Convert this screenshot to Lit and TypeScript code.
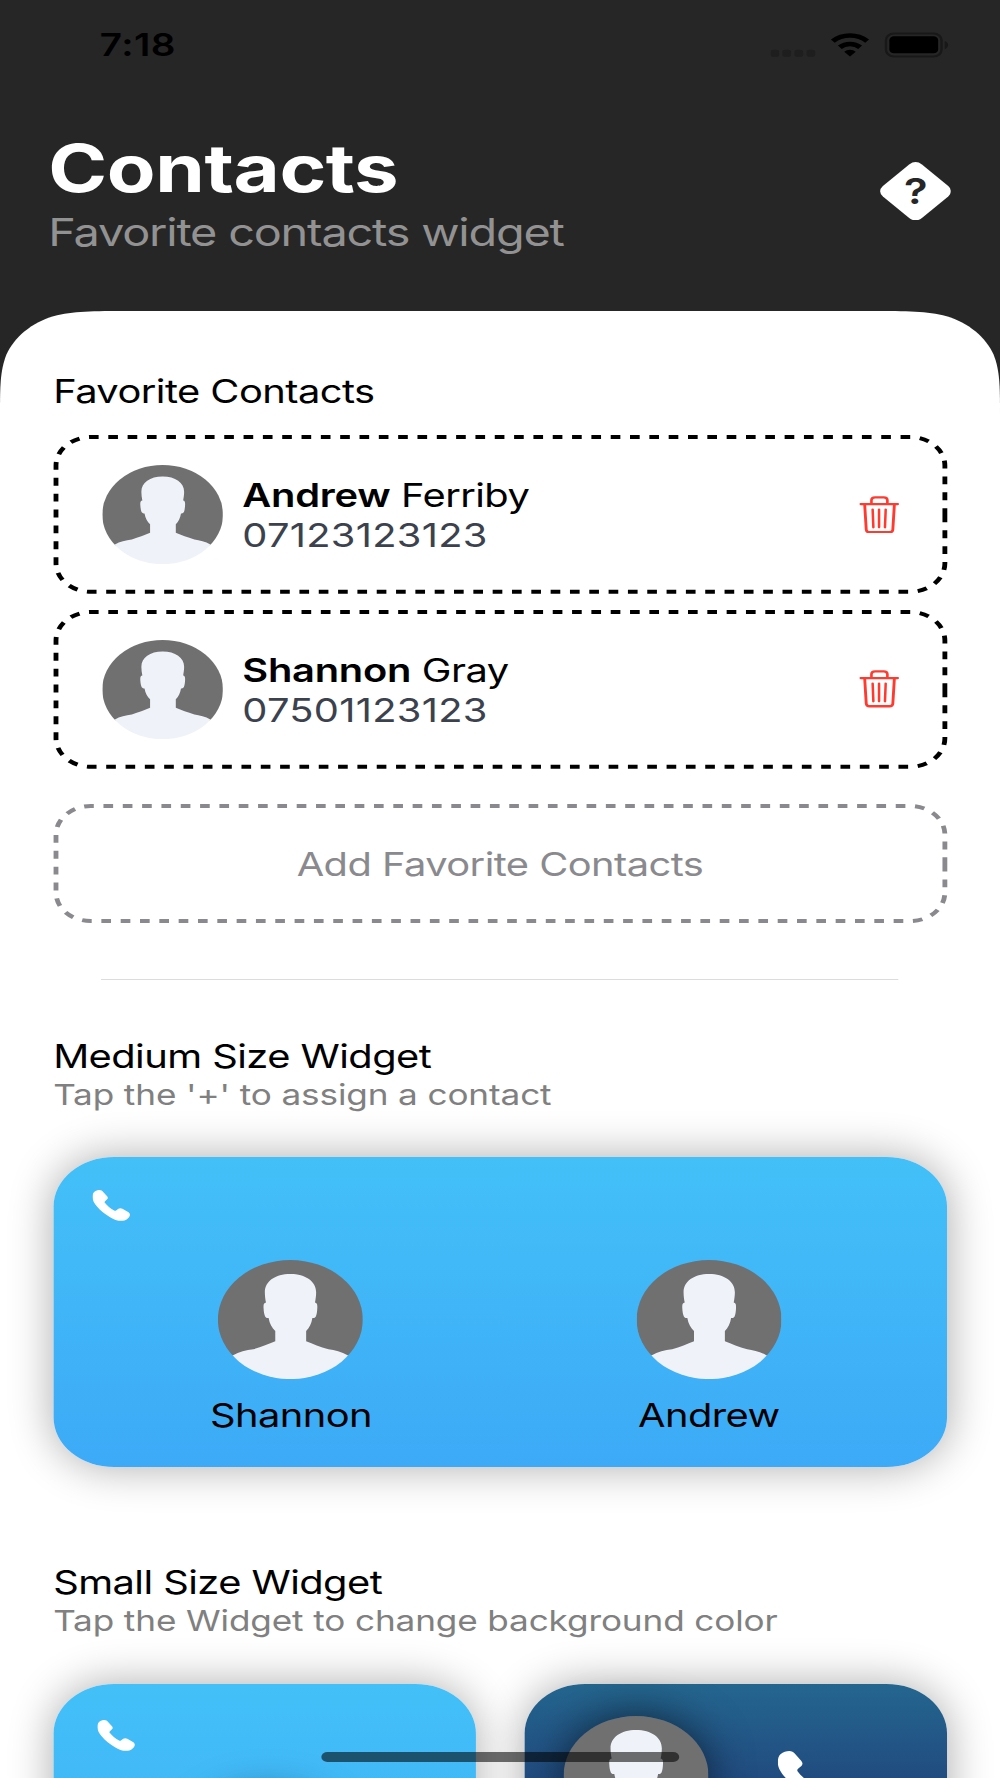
import { LitElement, html, css, svg } from "lit";
import { customElement, property } from "lit/decorators.js";

interface Contact {
  first: string;
  last: string;
  phone: string;
}

const CONTACTS: Contact[] = [
  { first: "Andrew", last: "Ferriby", phone: "07123123123" },
  { first: "Shannon", last: "Gray", phone: "07501123123" },
];

const ASSIGNED = ["Shannon", "Andrew"];

@customElement("contact-avatar")
class ContactAvatar extends LitElement {
  static styles = css`
    :host { display: block; width: 50px; height: 50px; border-radius: 50%; flex: none; }
    svg { display: block; width: 100%; height: 100%; }
  `;
  render() {
    return html`<svg viewBox="0 0 100 100">
      <defs><clipPath id="round"><circle cx="50" cy="50" r="50" /></clipPath></defs>
      <g clip-path="url(#round)">
        <rect width="100" height="81" fill="#707070" />
        <path fill="#eff3f9" d="M50 11.7C39.5 11.7 32.4 18 32.4 27C32.4 30 32.7 33 33.2 35.7C31.8 36 31.4 37 31.5 40C31.6 43 32 46 32.7 47.6C33.3 48.6 34.2 48.8 35 48.8C35.6 53.5 37.4 57.4 39.6 59.6V68.2C35 70.6 30 72.8 24.5 75C19.5 75.8 14.5 77 10.5 80L0 81V101H100V81L89.5 80C85.5 77 80.5 75.8 76.3 75C70.5 72.8 65.6 70.6 60.9 68.2V59.6C63 57.4 64.6 53.5 65.2 48.8C66 48.8 66.9 48.6 67.5 47.6C68.2 46 68.5 43 68.6 40C68.7 37 68.3 36 67 35.7C67.4 33 67.8 30 67.8 27C67.8 18 60.5 11.7 50 11.7Z" />
      </g>
    </svg>`;
  }
}

@customElement("phone-icon")
class PhoneIcon extends LitElement {
  static styles = css`
    :host { display: block; width: 15.5px; height: 15.6px; }
    svg { display: block; width: 100%; height: 100%; }
  `;
  render() {
    return html`<svg viewBox="0 0 100 100" fill="#fff">
      <path d="M4.4 6.5C9 2 14 0 19 0C23 0 26 2.500 28 5L39 20C41.500 24 41.500 27 39 30L33.500 36C32 38 31.800 39.500 33 41.500C38 50 49 61.500 58 66.500C60 67.500 61.500 67.300 63 66L69 61C72.500 58.300 76 58.300 80 61L95 71.500C98 73.700 100 76.500 100 80.500C100 86 96 91 92 95C88 98.500 83 100 77 100C66 100 57 95 47 88C33 78 21 66 12 53C5 43 0 33.500 0 23C0 16 1 10 4.400 6.500Z" />
    </svg>`;
  }
}

/** Rounded box whose dashes begin at the middle of the right edge and run clockwise. */
@customElement("dashed-box")
class DashedBox extends LitElement {
  @property({ type: Number }) h = 78;
  @property() stroke = "#000";
  static styles = css`
    :host { display: block; position: relative; width: 368px; }
    .outline { position: absolute; inset: 0; width: 100%; height: 100%; overflow: visible; }
    .body { position: relative; }
  `;
  render() {
    const w = 368, r = 14.4, h = this.h;
    const d = `M${w} ${h / 2}V${h - r}A${r} ${r} 0 0 1 ${w - r} ${h}H${r}A${r} ${r} 0 0 1 0 ${h - r}V${r}A${r} ${r} 0 0 1 ${r} 0H${w - r}A${r} ${r} 0 0 1 ${w} ${r}Z`;
    return html`
      <svg class="outline" viewBox="0 0 ${w} ${h}" fill="none">
        ${svg`<path d=${d} stroke=${this.stroke} stroke-width="2" stroke-dasharray="4 4" />`}
      </svg>
      <div class="body"><slot></slot></div>
    `;
  }
}

@customElement("app-root")
class AppRoot extends LitElement {
  static styles = css`
    :host { display: block; width: 1000px; height: 1778px; overflow: hidden; }
    * { box-sizing: border-box; }
    .screen {
      position: relative; width: 414px; height: 896px; overflow: hidden;
      zoom: 1.984375; transform: scaleX(1.21724); transform-origin: 0 0;
      background: #262626; color: #000;
      font-family: Inter, "Liberation Sans", sans-serif;
      font-size: 16.5px; line-height: 20px; letter-spacing: -0.23px;
      display: flex; flex-direction: column;
    }
    .status { height: 45px; flex: none; padding: 0 20.900px 0 41.300px; display: flex; align-items: center; justify-content: space-between; }
    .time { font-size: 16px; font-weight: 600; letter-spacing: 0.200px; padding-top: 0.600px; }
    .signals { display: block; width: 74px; height: 13px; }
    .header { flex: none; height: 111.700px; padding: 19.400px 20.300px 0 20px; display: flex; justify-content: space-between; align-items: flex-start; }
    .title { margin: 0; font-size: 33px; line-height: 41px; font-weight: 700; letter-spacing: -0.180px; color: #fff; }
    .tagline { font-size: 19.400px; line-height: 24px; letter-spacing: -0.500px; color: #929292; }
    .help { position: relative; width: 29.400px; height: 29.500px; margin-top: 17.100px; display: flex; align-items: center; justify-content: center; }
    .diamond { position: absolute; inset: 0; width: 100%; height: 100%; }
    .mark { position: relative; font-size: 18px; font-weight: 600; color: #262626; line-height: 29.500px; }
    .panel {
      flex: 1; min-height: 0; background: #fff; padding: 30.900px 22px 0; display: flex; flex-direction: column;
      clip-path: path("M0 53.500C0 38.100 0 30.400 2.620 22.100C5.920 13.050 13.050 5.920 22.100 2.620C30.400 0 38.100 0 53.500 0H360.500C375.900 0 383.600 0 391.900 2.620C400.950 5.920 408.080 13.050 411.380 22.100C414 30.400 414 38.100 414 53.500V740H0Z");
    }
    .panel > * { flex: none; }
    h2 { margin: 0; font-size: inherit; line-height: inherit; font-weight: 400; }
    .hint { font-size: 14.550px; line-height: 18px; letter-spacing: -0.050px; color: #808080; }
    .contacts { margin: 12.700px 1px 0; display: flex; flex-direction: column; gap: 10.100px; }
    .contact { height: 78px; padding: 0 19px; display: flex; align-items: center; }
    .contact contact-avatar { margin-left: 0.200px; }
    .who { flex: 1; margin-left: 8.100px; padding-top: 1.400px; }
    .first { font-weight: 600; letter-spacing: -0.100px; }
    .phone { color: #3c424d; letter-spacing: 0.120px; line-height: 20.500px; }
    .trash { width: 16.400px; height: 19px; display: block; margin-right: -0.200px; }
    .add { margin: 20px 1px 0; }
    .add-label { height: 58px; line-height: 58.500px; text-align: center; color: #8a8a8e; }
    .rule { height: 0.600px; margin: 28.900px 20px 28.800px; background: #dcdcde; }
    .widget { border-radius: 25px; box-shadow: 0 0 20px rgba(0, 0, 0, 0.33); background: linear-gradient(#43c0f8, #3daaf7); }
    .medium { height: 156px; margin-top: 22.600px; padding: 16.200px 12px 0; }
    .people { display: grid; grid-template-columns: 173px 173px; margin-top: 19.700px; }
    .medium phone-icon { margin-left: 4.200px; }
    .person { display: flex; flex-direction: column; align-items: center; gap: 8.600px; margin-left: -0.100px; }
    .large { width: 60px; height: 60px; }
    .small-title { margin-top: 48.400px; }
    .smalls { display: grid; grid-template-columns: 175px 175px; gap: 20px; margin-top: 22.800px; }
    .small { height: 156px; padding: 18.300px; display: flex; flex-direction: column; }
    .small .large, .duo .large { box-shadow: 0 0 20px rgba(0, 0, 0, 0.6); }
    .small .large { align-self: center; margin-top: 24px; margin-left: 3px; }
    .duo { height: 156px; padding: 16.100px; display: flex; background: linear-gradient(#24668f, #214b80 31%, #1d2560); }
    .duo phone-icon { width: 25px; height: 25px; margin: 17.600px 0 0 29px; }
    .home { position: absolute; left: 133px; bottom: 8px; width: 148px; height: 5px; border-radius: 2.500px; background: rgba(0, 0, 0, 0.56); }
  `;

  private trash() {
    return html`<svg class="trash" viewBox="0 0 16.4 19" fill="none" stroke="#ff3b30" stroke-linecap="round" stroke-linejoin="round">
      <path stroke-width="1.1" d="M0.500 4.050H15.900M5 4V2.200Q5 0.700 6.500 0.700H10.100Q11.600 0.700 11.600 2.200V4" />
      <path stroke-width="1.200" d="M2.200 4.300L2.850 17Q2.950 18.300 4.200 18.300H12.500Q13.750 18.300 13.850 17L14.500 4.300" />
      <path stroke-width="1.050" d="M5.500 6.800L5.800 15.800M8.150 6.800V15.800M10.900 6.800L10.600 15.800" />
    </svg>`;
  }

  render() {
    return html`
      <div class="screen">
        <div class="status">
          <span class="time">7:18</span>
          <svg class="signals" viewBox="319.100 16 74 13">
            <g fill="#1e1e1e">
              <rect x="319.100" y="24.900" width="3.600" height="3.600" rx="1.200" />
              <rect x="324" y="24.900" width="3.600" height="3.600" rx="1.200" />
              <rect x="329" y="24.900" width="3.600" height="3.600" rx="1.200" />
              <rect x="334" y="24.900" width="3.600" height="3.600" rx="1.200" />
            </g>
            <g fill="none" stroke="#000" stroke-width="2.300">
              <path d="M344.900 20.600A10.300 10.300 0 0 1 359.100 20.600" />
              <path d="M347.800 23.700A6.100 6.100 0 0 1 356.200 23.700" />
            </g>
            <path d="M352 28.300L349.600 25.900A3.500 3.500 0 0 1 354.400 25.900Z" />
            <rect x="366.900" y="16.800" width="23" height="11.500" rx="3.300" fill="none" stroke="#181818" stroke-width="1" />
            <rect x="368.300" y="18.200" width="20.200" height="8.500" rx="1.900" />
            <path d="M391.200 20.500Q392.600 21.200 392.600 22.600T391.200 24.700Z" fill="#181818" />
          </svg>
        </div>

        <header class="header">
          <div>
            <h1 class="title">Contacts</h1>
            <div class="tagline">Favorite contacts widget</div>
          </div>
          <div class="help">
            <svg class="diamond" viewBox="0 0 100 100">
              <path fill="#fff" d="M41 4Q50 -4 59 4L96 41Q104 50 96 59L59 96Q50 104 41 96L4 59Q-4 50 4 41Z" />
            </svg>
            <span class="mark">?</span>
          </div>
        </header>

        <main class="panel">
          <h2>Favorite Contacts</h2>
          <div class="contacts">
            ${CONTACTS.map(
              (c) => html`<dashed-box .h=${78}>
                <div class="contact">
                  <contact-avatar></contact-avatar>
                  <div class="who">
                    <div><span class="first">${c.first}</span> ${c.last}</div>
                    <div class="phone">${c.phone}</div>
                  </div>
                  ${this.trash()}
                </div>
              </dashed-box>`
            )}
          </div>
          <dashed-box class="add" .h=${58} .stroke=${"#8a8a8e"}>
            <div class="add-label">Add Favorite Contacts</div>
          </dashed-box>
          <div class="rule"></div>

          <h2>Medium Size Widget</h2>
          <div class="hint">Tap the '+' to assign a contact</div>
          <div class="widget medium">
            <phone-icon></phone-icon>
            <div class="people">
              ${ASSIGNED.map(
                (name) => html`<div class="person">
                  <contact-avatar class="large"></contact-avatar>
                  <span>${name}</span>
                </div>`
              )}
            </div>
          </div>

          <h2 class="small-title">Small Size Widget</h2>
          <div class="hint">Tap the Widget to change background color</div>
          <div class="smalls">
            <div class="widget small">
              <phone-icon></phone-icon>
              <contact-avatar class="large"></contact-avatar>
            </div>
            <div class="widget duo">
              <contact-avatar class="large"></contact-avatar>
              <phone-icon></phone-icon>
            </div>
          </div>
        </main>
        <div class="home"></div>
      </div>
    `;
  }
}
